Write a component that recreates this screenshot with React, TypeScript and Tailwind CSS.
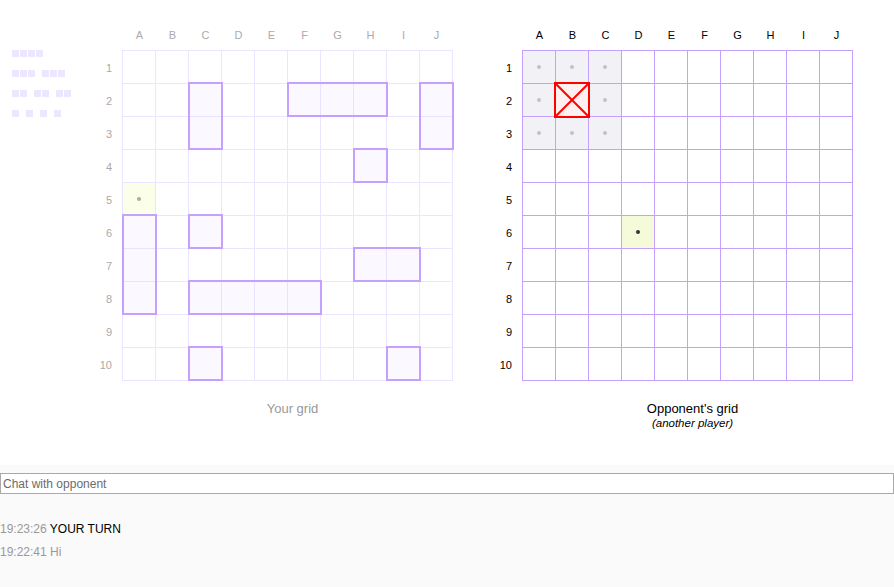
const COLS = ["A", "B", "C", "D", "E", "F", "G", "H", "I", "J"];
const ROWS = [1, 2, 3, 4, 5, 6, 7, 8, 9, 10];

// own fleet: [col, row, length, vertical]
const SHIPS: [number, number, number, boolean][] = [
    [2, 1, 2, true],
    [5, 1, 3, false],
    [9, 1, 2, true],
    [7, 3, 1, false],
    [0, 5, 3, true],
    [2, 5, 1, false],
    [7, 6, 2, false],
    [2, 7, 4, false],
    [2, 9, 1, false],
    [8, 9, 1, false],
];

const MISSES = ["0-0", "1-0", "2-0", "0-1", "2-1", "0-2", "1-2", "2-2"];

const FLEET = [[4], [3, 3], [2, 2, 2], [1, 1, 1, 1]];

const FleetSummary = () => (
    <div className="flex w-[80px] flex-col gap-[13px] pt-[23px]">
        {FLEET.map((row, i) => (
            <div key={i} className="flex h-[7px] gap-[7px]">
                {row.map((len, j) => (
                    <div key={j} className="flex gap-[1px]">
                        {Array.from({ length: len }).map((_, k) => (
                            <div key={k} className="h-[7px] w-[7px] bg-[#ece6fe]" />
                        ))}
                    </div>
                ))}
            </div>
        ))}
    </div>
);

const Dot = ({ color }: { color: string }) => (
    <div className={`h-[4px] w-[4px] rounded-full ${color}`} />
);

const OwnCell = ({ c, r }: { c: number; r: number }) => {
    const shot = c === 0 && r === 4;
    return (
        <div
            className={`flex h-[33px] w-[33px] items-center justify-center border-r border-b border-[#ebe6ff] ${
                shot ? "bg-[#fbfee9]" : ""
            }`}
        >
            {shot && <Dot color="bg-[#aaaaaa]" />}
        </div>
    );
};

const EnemyCell = ({ c, r }: { c: number; r: number }) => {
    const key = `${c}-${r}`;
    const miss = MISSES.includes(key);
    const hit = key === "1-1";
    const last = key === "3-5";
    let bg = "";
    if (miss) bg = "bg-[#f1f1f6]";
    if (hit) bg = "bg-[#fff0f0]";
    if (last) bg = "bg-[#f5fbd9]";
    return (
        <div
            className={`flex h-[33px] w-[33px] items-center justify-center border-r border-b border-[#c4a0ff] ${bg}`}
        >
            {miss && <Dot color="bg-[#c2c2c2]" />}
            {last && <Dot color="bg-[#333333]" />}
        </div>
    );
};

const Board = ({ enemy }: { enemy?: boolean }) => {
    const label = enemy ? "text-black" : "text-[#aaaaaa]";
    return (
        <div className="flex flex-col">
            <div className={`ml-[31px] grid h-[16px] grid-cols-[repeat(10,33px)] text-[11px] leading-[16px] ${label}`}>
                {COLS.map((c) => (
                    <div key={c} className="text-center">
                        {c}
                    </div>
                ))}
            </div>
            <div className="mt-[7px] flex items-start">
                <div className={`flex w-[30px] flex-col pt-[2px] pr-[10px] text-right text-[11px] ${label}`}>
                    {ROWS.map((r) => (
                        <div key={r} className="flex h-[33px] items-center justify-end">
                            {r}
                        </div>
                    ))}
                </div>
                <div
                    className={`relative grid grid-cols-[repeat(10,33px)] border-t border-l ${
                        enemy ? "border-[#c4a0ff]" : "border-[#ebe6ff]"
                    }`}
                >
                    {ROWS.map((_, r) =>
                        COLS.map((_, c) =>
                            enemy ? <EnemyCell key={`${c}-${r}`} c={c} r={r} /> : <OwnCell key={`${c}-${r}`} c={c} r={r} />
                        )
                    )}
                    {!enemy &&
                        SHIPS.map(([c, r, len, vertical], i) => (
                            <div
                                key={i}
                                className="absolute border-2 border-[#c4a0ff] bg-[rgba(170,130,255,0.05)]"
                                style={{
                                    left: c * 33 - 1,
                                    top: r * 33 - 2,
                                    width: (vertical ? 1 : len) * 33 + 2,
                                    height: (vertical ? len : 1) * 33 + 2,
                                }}
                            />
                        ))}
                    {enemy && (
                        <div className="absolute top-[31px] left-[31px] h-[36px] w-[36px] border-2 border-[#ff0000]">
                            <svg viewBox="0 0 32 32" className="h-full w-full" preserveAspectRatio="none">
                                <line x1="0" y1="0" x2="32" y2="32" stroke="#ff0000" strokeWidth="2" />
                                <line x1="32" y1="0" x2="0" y2="32" stroke="#ff0000" strokeWidth="2" />
                            </svg>
                        </div>
                    )}
                </div>
            </div>
            <div className="ml-[30px] mt-[19px] w-[331px] pl-[10px] text-center leading-[15px]">
                {enemy ? (
                    <>
                        <p className="text-[13px] text-black">Opponent's grid</p>
                        <p className="text-[11.5px] italic text-black">(another player)</p>
                    </>
                ) : (
                    <p className="text-[13px] text-[#999999]">Your grid</p>
                )}
            </div>
        </div>
    );
};

const Chat = () => (
    <div className="flex flex-1 flex-col bg-[#fafafa] pt-[8px]">
        <input
            className="h-[21px] w-full border border-[#a9a9a9] bg-white px-[2px] text-[12px] text-black outline-none placeholder:text-[#6b6b6b]"
            placeholder="Chat with opponent"
        />
        <div className="mt-[24px] flex flex-col text-[12px] leading-[23px]">
            <p>
                <span className="text-[#999999]">19:23:26 </span>
                <span className="text-black">YOUR TURN</span>
            </p>
            <p className="text-[#999999]">19:22:41 Hi</p>
        </div>
    </div>
);

const App = () => {
    return (
        <div className="flex h-[587px] w-[894px] flex-col overflow-hidden bg-white font-['Liberation_Sans',Arial,sans-serif]">
            <div className="flex h-[465px] shrink-0 items-start gap-[39px] pt-[27px] pl-[12px]">
                <div className="-mr-[39px] flex">
                    <FleetSummary />
                </div>
                <Board />
                <Board enemy />
            </div>
            <Chat />
        </div>
    );
};

export default App;
